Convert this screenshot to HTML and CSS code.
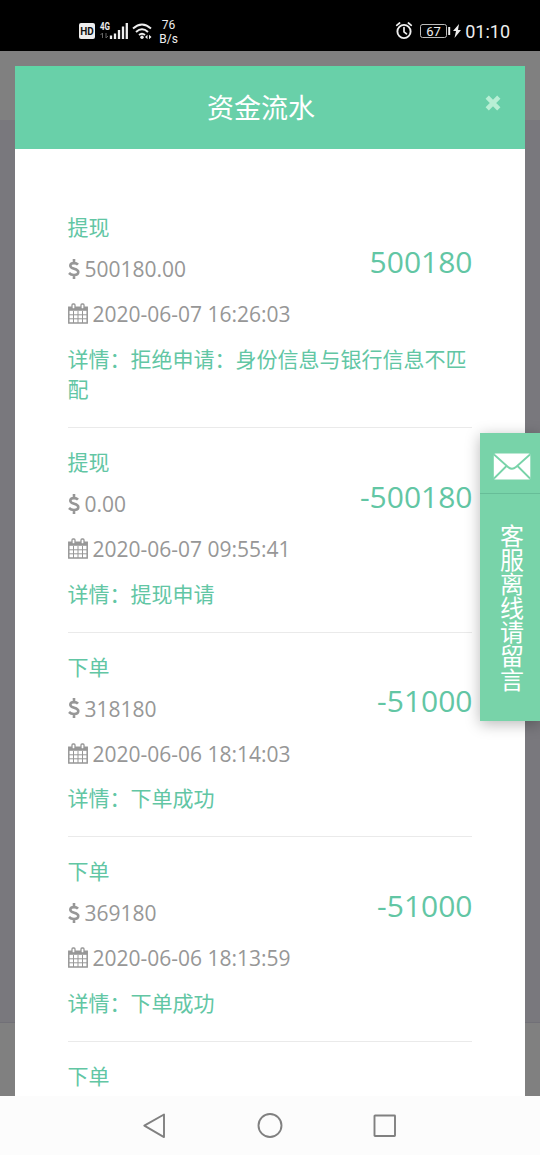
FILE: index.html
```
<!DOCTYPE html>
<html lang="zh-CN">
<head>
<meta charset="utf-8">
<title>资金流水</title>
<link rel="stylesheet" href="styles.css">
</head>
<body>
<svg class="defs" width="0" height="0">
  <symbol id="dollar" viewBox="0 0 12 20"><path d="M10 5.700C9 4.500 7.600 4.100 6 4.100c-2.200 0-3.700 1-3.700 2.700 0 3.800 8 2.200 8 6.300 0 1.800-1.700 2.900-4.300 2.900-2 0-3.700-.6-5-2M6 0v4M6 16v4" fill="none" stroke="currentColor" stroke-width="2.600"/></symbol>
  <symbol id="calendar" viewBox="0 0 20 21"><g fill="none" stroke="currentColor"><path d="M.8 4.200h18.400v15.700H.8z" stroke-width="1.500"/><path d="M1 11.800h18M1 15.800h18M5.500 8v12M10 8v12M14.500 8v12" stroke-width="1"/></g><path d="M1 4h18v3.800H1z" fill="currentColor"/><g fill="#fff" stroke="currentColor" stroke-width="1.300"><rect x="4" y="1" width="3" height="5" rx="1"/><rect x="13" y="1" width="3" height="5" rx="1"/></g></symbol>
</svg>
<div class="screen">
  <header class="status">
    <svg class="signals" width="76" height="20" viewBox="0 0 76 20">
      <rect x="1" y="2" width="16" height="16" rx="2" fill="#eee"/>
      <text x="9" y="14" class="hd" textLength="13.500" lengthAdjust="spacingAndGlyphs">HD</text>
      <text x="22" y="9" class="net" textLength="10" lengthAdjust="spacingAndGlyphs">4G</text>
      <path d="M24.500 12v5m-2-3 2-2M28 12v5l2-2" stroke="#666" fill="none"/>
      <path d="M33 14.500V18M37 12.500V18M41 9v9M45 5.500V18M48.800 2v16" stroke="#eee" stroke-width="2.300"/>
      <g fill="none" stroke="#eee" stroke-width="1.900"><path d="M55 7.500q9-8 18 0M58 11q6-5.500 12 0M61 14q3-2.500 6 0"/></g>
      <circle cx="64" cy="16.200" r="1.700" fill="#eee"/>
      <path d="m67 16 2.500-2.200v4.400zM73.500 16 71 13.800v4.400z" fill="#eee"/>
    </svg>
    <div class="speed"><span>76</span><span>B/s</span></div>
    <svg class="power" width="68" height="20" viewBox="0 0 68 20">
      <g fill="none" stroke="#eee" stroke-linecap="round"><circle cx="9" cy="10.500" r="6.600" stroke-width="1.900"/><path d="M9 6.500v4.300l2.500 2M1.700 4.300 4.600 2M13.400 2l2.900 2.300" stroke-width="1.700"/><rect x="25.500" y="3.500" width="26" height="13" rx="2" stroke="#bbb" stroke-width="1"/></g>
      <text x="38.500" y="14.700" class="level">67</text>
      <path d="M54.200 6v8" stroke="#eee" stroke-width="2"/>
      <path d="m64 3-6 7h3l-1.500 7L66 9h-3z" fill="#eee"/>
    </svg>
    <span class="clock">01:10</span>
  </header>
  <main class="backdrop">
    <section class="modal">
      <div class="modal-head">
        <h1>资金流水</h1>
        <svg class="close" width="16" height="16" viewBox="0 0 16 16"><path d="m2.200 2.200 11.600 11.600m0-11.600L2.200 13.800" stroke="#b8efd5" stroke-width="4.600"/></svg>
      </div>
      <div class="records">
        <article class="record">
          <div class="summary"><div><h2>提现</h2><p class="balance"><svg class="dollar"><use href="#dollar"/></svg>500180.00</p></div><strong>500180</strong></div>
          <p class="date"><svg class="calendar"><use href="#calendar"/></svg>2020-06-07 16:26:03</p>
          <p class="detail">详情：拒绝申请：身份信息与银行信息不匹配</p>
        </article>
        <article class="record">
          <div class="summary"><div><h2>提现</h2><p class="balance"><svg class="dollar"><use href="#dollar"/></svg>0.00</p></div><strong>-500180</strong></div>
          <p class="date"><svg class="calendar"><use href="#calendar"/></svg>2020-06-07 09:55:41</p>
          <p class="detail">详情：提现申请</p>
        </article>
        <article class="record">
          <div class="summary"><div><h2>下单</h2><p class="balance"><svg class="dollar"><use href="#dollar"/></svg>318180</p></div><strong>-51000</strong></div>
          <p class="date"><svg class="calendar"><use href="#calendar"/></svg>2020-06-06 18:14:03</p>
          <p class="detail">详情：下单成功</p>
        </article>
        <article class="record">
          <div class="summary"><div><h2>下单</h2><p class="balance"><svg class="dollar"><use href="#dollar"/></svg>369180</p></div><strong>-51000</strong></div>
          <p class="date"><svg class="calendar"><use href="#calendar"/></svg>2020-06-06 18:13:59</p>
          <p class="detail">详情：下单成功</p>
        </article>
        <article class="record"><h2>下单</h2></article>
      </div>
    </section>
  </main>
  <nav class="navbar">
    <svg width="26" height="28" viewBox="0 0 26 28"><path d="M23 2.500v22.600L3.300 13.600z"/></svg>
    <svg width="28" height="28" viewBox="0 0 28 28"><circle cx="14" cy="13.500" r="11.500"/></svg>
    <svg width="26" height="28" viewBox="0 0 26 28"><rect x="2.500" y="3.500" width="20.500" height="20.500" rx=".5"/></svg>
  </nav>
  <aside class="service">
    <div class="mail"><svg width="38" height="28" viewBox="0 0 38 28"><rect x=".8" y="1.500" width="36.500" height="26" rx="1.500" fill="#fff"/><path d="m1 2.500 14 12.500q4 3.500 8 0L37 2.500M1 26.500 13.500 14M37 26.500 24.500 14" fill="none" stroke="#78d3a9" stroke-width="1.800"/></svg></div>
    <div class="label">客服离线请留言</div>
  </aside>
</div>
</body>
</html>
```
FILE: styles.css
```
* { box-sizing: border-box; }
body { margin: 0; font-family: "Open Sans", "Noto Sans CJK SC", sans-serif; }
h1, h2, p { margin: 0; font-weight: 400; }
.defs { position: absolute; }
.screen { position: relative; width: 540px; height: 1155px; display: flex; flex-direction: column; overflow: hidden; }
.status { height: 51px; flex: none; background: #000; color: #eee; display: flex; align-items: flex-start; padding: 21px 30px 0 78px; font-family: Roboto, sans-serif; }
.signals { flex: none; }
.hd { font: 700 10px Roboto, sans-serif; text-anchor: middle; fill: #111; }
.net { font: 700 10px Roboto, sans-serif; fill: #eee; }
.speed { display: flex; flex-direction: column; align-items: center; width: 30px; margin-top: -3px; font-size: 12px; line-height: 14px; }
.power { margin-left: 212px; flex: none; }
.level { font: 13px Roboto, sans-serif; text-anchor: middle; fill: #eee; }
.clock { font-size: 18px; line-height: 22px; margin-left: 2px; white-space: nowrap; }
.backdrop { height: 1045px; flex: none; padding: 15px 15px 0; overflow: hidden; background: linear-gradient(#808080 0 69px, #79787d 69px 971px, #717077 971px 972px, #808080 972px); }
.modal { background: #fff; height: 1030px; }
.modal-head { display: flex; justify-content: center; height: 83.400px; background: #69d0a9; border-top: 4px solid #60d5a6; position: relative; }
.modal-head h1 { color: #fff; font-size: 27px; line-height: 40px; padding: 18px 18px 0 0; }
.close { position: absolute; right: 24px; top: 25px; }
.records { padding: 44px 53px 0 52.500px; }
.record { height: 204.500px; padding-top: 19px; border-bottom: 1px solid #eaeaea; color: #62c6a4; font-size: 21px; line-height: 30px; }
.record:first-child { height: 235px; }
.record:last-child { border: 0; }
.record h2 { font-size: 21px; line-height: 30px; }
.summary { display: flex; justify-content: space-between; height: 72px; }
.summary strong { font-size: 30px; font-weight: 400; line-height: 40px; padding-top: 29.500px; margin-right: -.5px; }
.balance, .date { display: flex; align-items: center; gap: 5px; color: #979797; }
.balance { margin-top: 12px; }
.date { margin-top: 15px; }
.detail { margin-top: 14.400px; }
.dollar { width: 12px; height: 20px; margin-top: -1px; }
.calendar { width: 20px; height: 21px; margin-top: -1px; }
.navbar { height: 59px; background: #fcfcfc; display: flex; align-items: center; justify-content: space-between; padding: 0 142px 0 141px; }
.navbar svg { fill: none; stroke: #808080; stroke-width: 1.900; stroke-linejoin: round; }
.service { position: absolute; right: 0; top: 433px; width: 60px; height: 288px; background: #78d3a9; box-shadow: 0 3px 14px rgba(0,0,0,.28); color: #fff; }
.mail { height: 61px; border-bottom: 1px solid #67bd98; display: flex; align-items: center; justify-content: center; padding: 6px 0 0 3px; }
.label { width: 24px; margin: 30px 0 0 20px; font-size: 24px; line-height: 24px; word-break: break-all; }
```
